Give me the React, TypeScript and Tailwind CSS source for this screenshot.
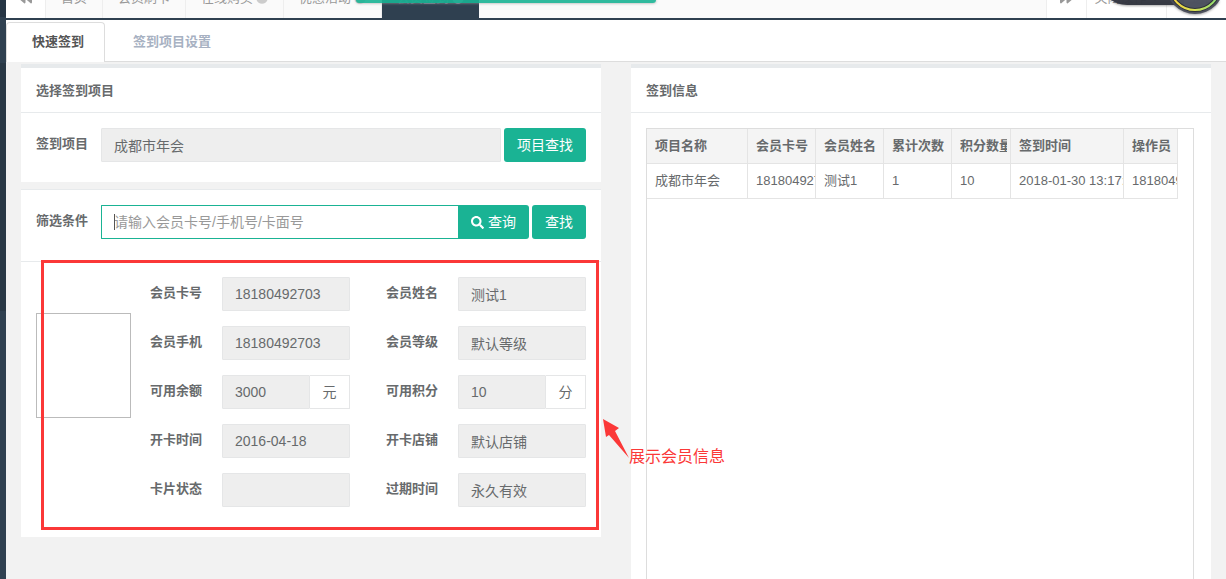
import * as React from 'react'
import {
  FaBackward,
  FaCaretDown,
  FaCircle,
  FaForward,
  FaSearch,
  FaSignOutAlt,
} from 'react-icons/fa'

type MemberField = {
  id: string
  label: string
  value: string
  unit?: string
}

const OPEN_PAGES = [
  { title: '首页', closable: false, active: false },
  { title: '会员刷卡', closable: false, active: false },
  { title: '在线购买', closable: true, active: false },
  { title: '优惠活动', closable: true, active: false },
  { title: '会员签到', closable: true, active: true },
]

const MEMBER_FIELDS: MemberField[] = [
  { id: 'card-no', label: '会员卡号', value: '18180492703' },
  { id: 'name', label: '会员姓名', value: '测试1' },
  { id: 'mobile', label: '会员手机', value: '18180492703' },
  { id: 'level', label: '会员等级', value: '默认等级' },
  { id: 'balance', label: '可用余额', value: '3000', unit: '元' },
  { id: 'points', label: '可用积分', value: '10', unit: '分' },
  { id: 'opened-at', label: '开卡时间', value: '2016-04-18' },
  { id: 'shop', label: '开卡店铺', value: '默认店铺' },
  { id: 'status', label: '卡片状态', value: '' },
  { id: 'expires', label: '过期时间', value: '永久有效' },
]

const COLUMNS = [
  { title: '项目名称', width: 'w-[101px]' },
  { title: '会员卡号', width: 'w-[68px]' },
  { title: '会员姓名', width: 'w-[68px]' },
  { title: '累计次数', width: 'w-[68px]' },
  { title: '积分数量', width: 'w-[59px]' },
  { title: '签到时间', width: 'w-[113px]' },
  { title: '操作员', width: 'w-[54px]' },
]

const RECORDS = [
  ['成都市年会', '18180492703', '测试1', '1', '10', '2018-01-30 13:17:25', '18180492703'],
]

const inputClass =
  'h-[34px] w-full min-w-0 rounded-[1px] border border-[#e5e6e7] bg-[#eee] px-3 text-sm text-[#676a6c] outline-none'
const buttonClass =
  'flex h-[34px] shrink-0 items-center gap-1 bg-[#1ab394] px-[13px] text-sm text-white'
const labelClass = 'h-8 shrink-0 text-[13px] leading-8 font-bold'

function TopBar() {
  return (
    <header className="relative h-5 overflow-hidden border-b-2 border-[#2f4050] bg-[#fafafa]">
      <div className="flex h-full items-end text-[13px] text-[#999]">
        <button
          aria-label="向左"
          className="flex h-10 w-10 shrink-0 items-center justify-center border-r border-[#eee] bg-white"
        >
          <FaBackward />
        </button>
        <nav className="flex flex-1">
          {OPEN_PAGES.map((page) => (
            <a
              key={page.title}
              href="#"
              className={
                page.active
                  ? 'flex h-10 items-center gap-[3px] bg-[#2f4050] px-[15px] text-[#5f7183]'
                  : 'flex h-10 items-center gap-[3px] border-r border-[#eee] px-[15px]'
              }
            >
              {page.title}
              {page.closable ? (
                <FaCircle
                  className={page.active ? 'text-[12px] text-[#7f8fa0]' : 'text-[12px] text-[#ccc]'}
                />
              ) : null}
            </a>
          ))}
        </nav>
        <button
          aria-label="向右"
          className="flex h-10 w-[41px] shrink-0 items-center justify-center border-x border-[#eee] bg-white"
        >
          <FaForward />
        </button>
        <button className="flex h-10 w-20 items-center justify-center gap-1 border-r border-[#eee] bg-white">
          关闭操作
          <FaCaretDown className="w-2" />
        </button>
        <button className="flex h-10 w-[59px] items-center justify-center gap-1 bg-white">
          <FaSignOutAlt className="text-[12px]" />
          退出
        </button>
      </div>
      <div className="absolute top-0 left-[350px] h-[3px] w-[300px] rounded-b-[3px] bg-[#1ab394]/90 shadow-[0_0_3px_#999]" />
    </header>
  )
}

// Floating desktop widget: a dark pill with a round gauge at its end
function Gauge() {
  return (
    <svg
      className="absolute top-0 right-0 drop-shadow-[0_1px_1px_rgba(0,0,0,0.35)]"
      width="120"
      height="20"
      viewBox="0 0 120 20"
      aria-hidden="true"
    >
      <defs>
        <linearGradient id="ring" gradientUnits="userSpaceOnUse" x1="68" x2="110" y1="0" y2="0">
          <stop offset="0" stopColor="#f3d33f" />
          <stop offset="0.5" stopColor="#d9e356" />
          <stop offset="1" stopColor="#8fdc72" />
        </linearGradient>
      </defs>
      <path d="M5 0C11 4 16 5 24 5H78V0Z" fill="#32353f" fillOpacity="0.96" />
      <circle cx="89" cy="-15" r="29" fill="#484c59" fillOpacity="0.94" />
      <circle
        cx="89"
        cy="-15"
        r="25"
        fill="#4f5462"
        fillOpacity="0.6"
        stroke="#2d303a"
        strokeWidth="4"
      />
      <circle cx="89" cy="-15" r="25" fill="none" stroke="url(#ring)" strokeWidth="2" />
    </svg>
  )
}

function PageTabs() {
  return (
    <nav className="flex h-[42px] items-end border-b border-[#ddd] bg-white text-[13px] font-bold">
      <a
        href="#"
        className="-mb-px flex h-10 items-center rounded-t border border-b-0 border-[#ddd] bg-white px-5 pb-0.5 pl-[25px] text-[#555]"
      >
        快速签到
      </a>
      <a href="#" className="flex h-10 items-center px-7 pt-0.5 text-[#a7b1c2]">
        签到项目设置
      </a>
    </nav>
  )
}

function PanelTitle({ children }: { children: React.ReactNode }) {
  return (
    <h2 className="flex h-[49px] items-center border-t-4 border-b border-[#e7eaec] px-[15px] pt-0.5 text-[13px] font-bold">
      {children}
    </h2>
  )
}

function MemberInfo() {
  return (
    <div className="relative flex gap-[19px] border-t border-[#e7eaec] px-[15px] pt-[15px] pb-[30px]">
      <div className="mt-9 h-[105px] w-[95px] shrink-0 border border-[#bbb]" />
      <div className="grid flex-1 grid-cols-2 gap-x-9 gap-y-[15px]">
        {MEMBER_FIELDS.map((field) => (
          <div key={field.id} className="flex">
            <label htmlFor={field.id} className={labelClass + ' w-[72px]'}>
              {field.label}
            </label>
            <input id={field.id} readOnly value={field.value} className={inputClass} />
            {field.unit ? (
              <span className="flex h-[34px] w-10 shrink-0 items-center justify-center border border-l-0 border-[#e5e6e7] text-sm">
                {field.unit}
              </span>
            ) : null}
          </div>
        ))}
      </div>
      <div className="pointer-events-none absolute -top-0.5 right-0.5 bottom-[7px] left-5 border-3 border-[#fb3838]">
        <svg
          className="absolute top-[156px] left-full ml-[7px]"
          width="28"
          height="40"
          viewBox="0 0 28 40"
          fill="#fb3838"
          aria-hidden="true"
        >
          <path d="M0 0L16 9L12 12L26 39L6 16L3 18Z" />
        </svg>
        <p className="absolute top-[182px] left-full ml-[33px] text-base leading-6 whitespace-nowrap text-[#fb3838]">
          展示会员信息
        </p>
      </div>
    </div>
  )
}

function RecordTable() {
  return (
    <div className="m-[15px] mr-[17px] min-h-[500px] border border-[#ddd]">
      <table className="w-[531px] table-fixed border-separate border-spacing-0 text-[13px]">
        <thead>
          <tr>
            {COLUMNS.map((column) => (
              <th
                key={column.title}
                className={
                  'h-[35px] border-r border-b border-[#e4e4e4] bg-[#f4f4f4] p-0 pr-[3px] pl-2 text-left font-bold ' +
                  column.width
                }
              >
                <div className="overflow-hidden whitespace-nowrap">{column.title}</div>
              </th>
            ))}
          </tr>
        </thead>
        <tbody>
          {RECORDS.map((record, row) => (
            <tr key={row}>
              {record.map((value, i) => (
                <td
                  key={i}
                  className="h-[35px] border-r border-b border-[#e4e4e4] p-0 pl-2"
                >
                  <div className="overflow-hidden whitespace-nowrap">{value}</div>
                </td>
              ))}
            </tr>
          ))}
        </tbody>
      </table>
    </div>
  )
}

export default function App() {
  const [keyword, setKeyword] = React.useState('')

  return (
    <div className="relative flex h-screen overflow-hidden bg-[#f2f2f2] font-['Liberation_Sans','Noto_Sans_CJK_SC',sans-serif] text-[#676a6c]">
      <aside className="flex w-1.5 shrink-0 flex-col bg-[#2f4050]">
        <div className="h-[17px] bg-[#263544]" />
        <div className="mt-[46px] h-[248px] bg-[#293846]" />
      </aside>
      <div className="min-w-0 flex-1">
        <TopBar />
        <PageTabs />
        <main className="flex items-start gap-[30px] px-[15px] pt-0.5">
          <div className="min-w-0 flex-1">
            <section className="bg-white">
              <PanelTitle>选择签到项目</PanelTitle>
              <div className="flex h-[69px] gap-[3px] p-[15px]">
                <label htmlFor="project" className={labelClass + ' w-[62px]'}>
                  签到项目
                </label>
                <input id="project" readOnly value="成都市年会" className={inputClass} />
                <button className={buttonClass + ' rounded-[3px]'}>项目查找</button>
              </div>
            </section>
            <section className="mt-[7px] border-t border-[#e7eaec] bg-white">
              <form
                className="flex h-[71px] p-[15px]"
                onSubmit={(e) => e.preventDefault()}
              >
                <label htmlFor="keyword" className={labelClass + ' w-[65px]'}>
                  筛选条件
                </label>
                <div className="relative h-[34px] min-w-0 flex-1">
                  <input
                    id="keyword"
                    value={keyword}
                    onChange={(e) => setKeyword(e.target.value)}
                    placeholder="请输入会员卡号/手机号/卡面号"
                    className="h-full w-full rounded-l-[1px] border border-r-0 border-[#1ab394] px-3 text-sm caret-transparent outline-none placeholder:text-[#999]"
                  />
                  {keyword === '' ? (
                    <span className="pointer-events-none absolute top-[9px] left-[13px] h-4 w-px bg-[#555]" />
                  ) : null}
                </div>
                <button className={buttonClass + ' rounded-r-[3px]'}>
                  <FaSearch className="text-[13px]" />
                  查询
                </button>
                <button type="button" className={buttonClass + ' ml-[3px] rounded-[3px]'}>
                  查找
                </button>
              </form>
              <MemberInfo />
            </section>
          </div>
          <section className="min-w-0 flex-1 bg-white">
            <PanelTitle>签到信息</PanelTitle>
            <RecordTable />
          </section>
        </main>
      </div>
      <Gauge />
    </div>
  )
}
